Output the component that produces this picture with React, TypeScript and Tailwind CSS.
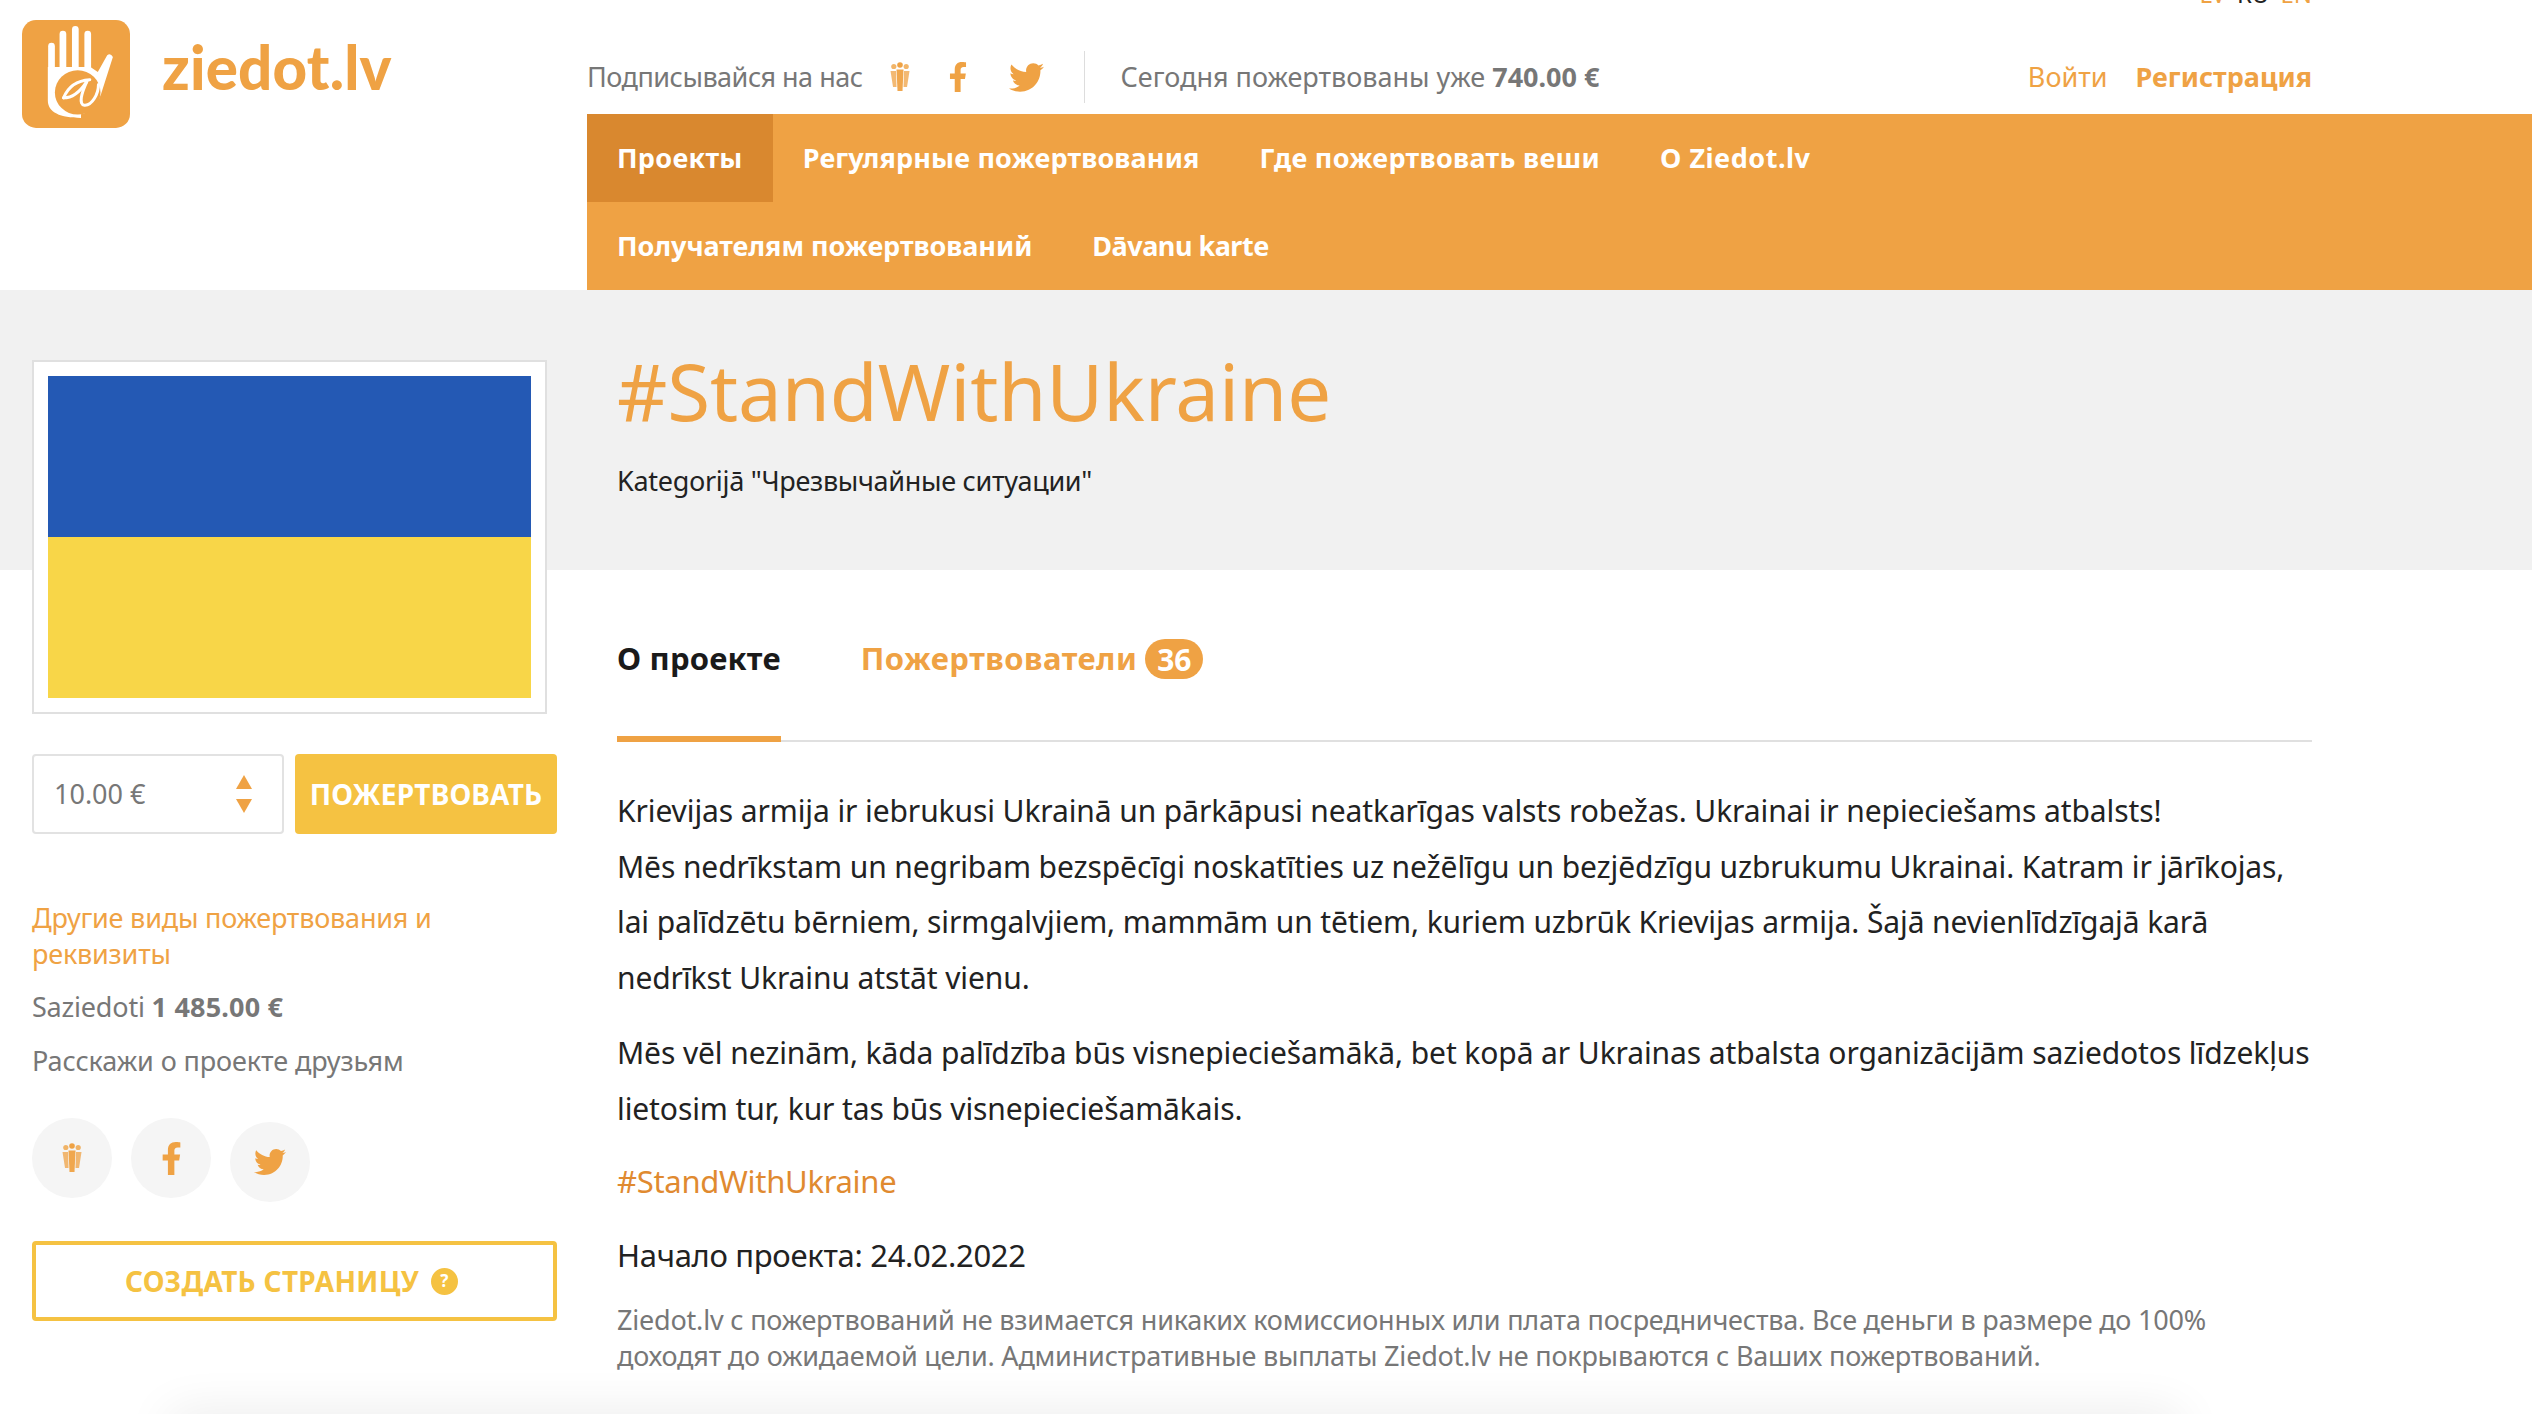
import React from "react";
import { FaFacebookF, FaTwitter } from "react-icons/fa";

function Logo() {
	return (
		<svg viewBox="36 30 322 322" className="w-[108px] h-[108px]">
			<rect x="36" y="30" width="322" height="322" rx="42" fill="#efa244" />
			<g stroke="#fff" strokeWidth="20" strokeLinecap="round" fill="none">
				<path d="M124 108V200" />
				<path d="M158 72V175" />
				<path d="M195 58V175" />
				<path d="M232 72V185" />
			</g>
			<path
				d="M113 170V270C113 305 150 322 212 322L212 311C240 305 262 280 272 250L307 140Q300 128 290 135L262 185L240 170Z"
				fill="#fff"
			/>
			<ellipse cx="202" cy="246" rx="68" ry="66" fill="#efa244" />
			<g stroke="#fff" strokeWidth="9" strokeLinecap="round" fill="none">
				<path d="M160 262C175 225 205 210 238 208" />
				<path d="M160 262C185 262 205 250 228 215" />
				<path d="M230 212C212 250 205 282 222 284C245 286 264 250 264 222" />
			</g>
		</svg>
	);
}

function PeopleIcon() {
	return (
		<svg viewBox="0 0 20 30" className="w-[20px] h-[30px]" fill="#efa244">
			<circle cx="3.8" cy="4.5" r="2.6" opacity="0.8" />
			<circle cx="10" cy="3" r="2.8" />
			<circle cx="16.2" cy="4.5" r="2.6" opacity="0.8" />
			<path d="M0.5 9H6L6.5 25H3Z" opacity="0.75" />
			<path d="M19.5 9H14L13.5 25H17Z" opacity="0.75" />
			<path d="M6.5 7.5H13.5L12.5 29H7.5Z" opacity="0.95" />
		</svg>
	);
}

function NavItem({ label, active, className }: { label: string; active?: boolean; className?: string }) {
	return (
		<a
			className={
				(active
					? "flex items-center h-[88px] px-[30px] bg-[#d9882f] text-white font-bold "
					: "flex items-center h-[88px] px-[30px] text-white font-bold ") + (className || "")
			}
		>
			{label}
		</a>
	);
}

function ShareCircle({ children, className }: { children: React.ReactNode; className?: string }) {
	return (
		<div
			className={
				"flex items-center justify-center w-[80px] h-[80px] rounded-full bg-[#f5f5f5] text-[#efa244] " +
				(className || "")
			}
		>
			{children}
		</div>
	);
}

export default function App() {
	return (
		<div className="relative h-[1414px] overflow-hidden bg-white font-['Noto_Sans',sans-serif]">
			<header className="flex h-[290px]">
				<div className="flex items-start w-[587px] pl-[22px] pt-[20px]">
					<Logo />
					<div className="ml-[32px] mt-[11px] font-['Lato',sans-serif] font-black text-[60px] leading-[72px] tracking-[0.2px] text-[#efa244]">
						ziedot.lv
					</div>
				</div>
				<div className="flex flex-col flex-1 min-w-0">
					<div className="flex justify-end gap-[11px] h-[30px] -mt-[21px] pr-[220px] text-[24px] leading-[30px]">
						<span className="text-[#efa244]">LV</span>
						<span className="text-[#222]">RU</span>
						<span className="text-[#efa244]">EN</span>
					</div>
					<div className="flex items-center h-[105px] pt-[31px] pr-[220px] text-[27px] text-[#777]">
						<span className="tracking-[-0.5px]">Подписывайся на нас</span>
						<div className="flex items-center ml-[27px] text-[#efa244]">
							<PeopleIcon />
							<FaFacebookF className="ml-[33px] text-[30px]" />
							<FaTwitter className="ml-[36px] text-[35px]" />
						</div>
						<div className="ml-[40px] mr-[36px] w-px h-[52px] bg-[#ddd]" />
						<span>
							Сегодня пожертвованы уже <b className="font-bold">740.00 €</b>
						</span>
						<a className="ml-auto text-[#efa244]">Войти</a>
						<a className="ml-[28px] font-bold text-[#efa244]">Регистрация</a>
					</div>
					<nav className="flex-1 bg-[#efa244] text-[27px]">
						<div className="flex flex-wrap max-w-[1300px]">
							<NavItem label="Проекты" active className="tracking-[0.3px]" />
							<NavItem label="Регулярные пожертвования" className="tracking-[0.15px]" />
							<NavItem label="Где пожертвовать веши" className="tracking-[0.3px]" />
							<NavItem label="O Ziedot.lv" className="tracking-[0.5px]" />
							<NavItem label="Получателям пожертвований" className="tracking-[-0.05px]" />
							<NavItem label="Dāvanu karte" className="tracking-[-0.5px]" />
						</div>
					</nav>
				</div>
			</header>

			<section className="h-[280px] bg-[#f1f1f1] pl-[617px] pt-[53px]">
				<h1 className="text-[78px] leading-[96px] text-[#efa244] tracking-[-0.1px]">#StandWithUkraine</h1>
				<p className="mt-[24px] text-[27px] leading-[36px] text-[#222] tracking-[-0.3px]">
					Kategorijā "Чрезвычайные ситуации"
				</p>
			</section>

			<div className="flex">
				<aside className="relative w-[525px] ml-[32px] mr-[60px] shrink-0 -mt-[210px]">
					<div className="w-[515px] h-[354px] border-2 border-[#e0e0e0] bg-white p-[14px]">
						<div className="h-[161px] bg-[#2459b4]" />
						<div className="h-[161px] bg-[#f8d648]" />
					</div>
					<div className="flex mt-[40px] gap-[11px]">
						<div className="flex items-center justify-between w-[252px] h-[80px] pl-[20px] pr-[30px] border-2 border-[#e2e2e2] rounded-[4px] text-[27px] text-[#777]">
							<span>10.00 €</span>
							<div className="flex flex-col gap-[10px]">
								<div className="w-0 h-0 border-x-[8px] border-x-transparent border-b-[14px] border-b-[#efa244]" />
								<div className="w-0 h-0 border-x-[8px] border-x-transparent border-t-[14px] border-t-[#efa244]" />
							</div>
						</div>
						<button className="flex-1 h-[80px] rounded-[4px] bg-[#f5c242] text-white font-bold text-[28px] tracking-[0.2px]">
							ПОЖЕРТВОВАТЬ
						</button>
					</div>
					<a className="block mt-[66px] text-[27px] leading-[36px] text-[#efa244] tracking-[-0.2px]">
						Другие виды пожертвования и реквизиты
					</a>
					<p className="mt-[17px] text-[27px] leading-[36px] text-[#777] tracking-[-0.2px]">
						Saziedoti <b className="font-bold tracking-[0.2px]">1 485.00 €</b>
					</p>
					<p className="mt-[18px] text-[27px] leading-[36px] text-[#777] tracking-[-0.1px]">
						Расскажи о проекте друзьям
					</p>
					<div className="flex items-start gap-[19px] mt-[39px]">
						<ShareCircle>
							<PeopleIcon />
						</ShareCircle>
						<ShareCircle>
							<FaFacebookF className="text-[33px]" />
						</ShareCircle>
						<ShareCircle className="mt-[4px]">
							<FaTwitter className="text-[32px]" />
						</ShareCircle>
					</div>
					<button className="flex items-center justify-center w-full h-[80px] mt-[39px] border-[4px] border-[#f5c242] rounded-[4px] text-[#f5c242] font-bold text-[28px] tracking-[0.3px]">
						СОЗДАТЬ СТРАНИЦУ
						<span className="flex items-center justify-center ml-[12px] mr-[6px] w-[27px] h-[27px] rounded-full bg-[#f5c242] text-white text-[17px]">
							?
						</span>
					</button>
				</aside>

				<main className="w-[1695px]">
					<div className="flex items-center h-[172px] pt-[6px] border-b-2 border-[#e0e0e0]">
						<div className="relative flex items-center h-full">
							<span className="text-[31px] font-bold text-[#1a1a1a] tracking-[0.2px]">О проекте</span>
							<div className="absolute left-0 right-0 -bottom-[2px] h-[6px] bg-[#efa244]" />
						</div>
						<span className="ml-[80px] text-[31px] font-bold text-[#efa244] tracking-[0.5px]">Пожертвователи</span>
						<span className="flex items-center justify-center ml-[8px] w-[58px] h-[40px] mt-[2px] rounded-full bg-[#efa244] text-white font-bold text-[30px]">
							36
						</span>
					</div>
					<div className="mt-[41px] text-[31px] leading-[55.7px] text-[#222] tracking-[-0.3px]">
						<p className="text-[30px] tracking-[-0.1px] whitespace-nowrap">
							Krievijas armija ir iebrukusi Ukrainā un pārkāpusi neatkarīgas valsts robežas. Ukrainai ir nepieciešams atbalsts!
							<br />
							Mēs nedrīkstam un negribam bezspēcīgi noskatīties uz nežēlīgu un bezjēdzīgu uzbrukumu Ukrainai. Katram ir jārīkojas,
							<br />
							lai palīdzētu bērniem, sirmgalvjiem, mammām un tētiem, kuriem uzbrūk Krievijas armija. Šajā nevienlīdzīgajā karā
							<br />
							nedrīkst Ukrainu atstāt vienu.
						</p>
						<p className="mt-[19px] text-[30px] tracking-[-0.1px] whitespace-nowrap">
							Mēs vēl nezinām, kāda palīdzība būs visnepieciešamākā, bet kopā ar Ukrainas atbalsta organizācijām saziedotos līdzekļus
							<br />
							lietosim tur, kur tas būs visnepieciešamākais.
						</p>
						<a className="block mt-[18px] text-[#e08a30]">#StandWithUkraine</a>
						<p className="mt-[18px]">Начало проекта: 24.02.2022</p>
					</div>
					<p className="mt-[18px] text-[27px] leading-[36px] text-[#777] tracking-[-0.2px]">
						Ziedot.lv с пожертвований не взимается никаких комиссионных или плата посредничества. Все деньги в размере до 100% доходят до ожидаемой цели. Административные выплаты Ziedot.lv не покрываются с Ваших пожертвований.
					</p>
				</main>
			</div>

			<div className="absolute left-[170px] w-[2010px] -bottom-[40px] h-[40px] shadow-[0_0_50px_rgba(0,0,0,0.09)]" />
		</div>
	);
}
